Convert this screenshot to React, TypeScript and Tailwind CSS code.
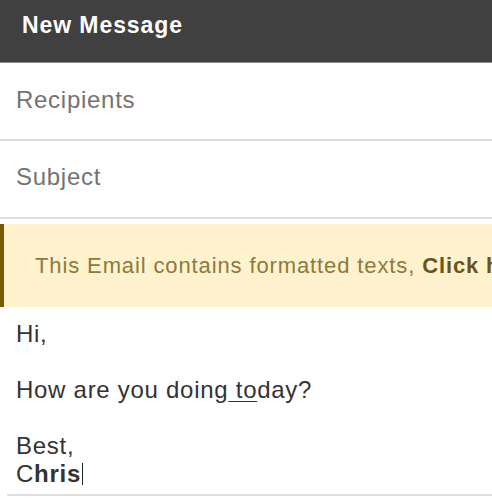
import React from 'react';

const font = { fontFamily: '"Liberation Sans", Arial, sans-serif' };

function Field({ label, pt }: { label: string; pt: string }) {
  return (
    <div className={`h-[78px] border-b-2 border-[#dedede] pl-4 ${pt}`}>
      <span className="block text-[24px] leading-[28px] tracking-[0.03em] text-[#737373]">{label}</span>
    </div>
  );
}

export default function App() {
  return (
    <div className="w-[492px] h-[498px] overflow-hidden bg-white" style={font}>
      <div className="h-[63px] bg-[#404040] border-b border-[#8c8c8c] pl-[22px] pt-[11px]">
        <h1 className="text-[23px] leading-[28px] font-bold tracking-[0.04em] text-white">New Message</h1>
      </div>
      <Field label="Recipients" pt="pt-[23px]" />
      <Field label="Subject" pt="pt-[22px]" />
      <div className="mt-[5px] h-[83px] flex items-center border-l-4 border-[#7a5a00] bg-[#fff2cc] pl-[31px] overflow-hidden">
        <p className="whitespace-nowrap text-[22px] leading-[26px] tracking-[0.04em] text-[#8c7b3e]">
          This Email contains formatted texts, <b className="text-[#6b5415]">Click here to view</b>
        </p>
      </div>
      <div className="ml-[7px] pt-[13px] pb-[6px] pl-[9px] border-b-2 border-[#dedede]">
        <div className="text-[24px] leading-[28px] tracking-[0.03em] text-[#333]">
          <p>Hi,</p>
          <p>&nbsp;</p>
          <p>
            How are you doing<span className="underline decoration-1 underline-offset-[3px]"> to</span>day?
          </p>
          <p>&nbsp;</p>
          <p>Best,</p>
          <p className="flex items-center">
            <span>C</span>
            <b>hris</b>
            <span className="ml-[1px] inline-block w-[1.5px] h-[22px] bg-[#222]" />
          </p>
        </div>
      </div>
    </div>
  );
}
